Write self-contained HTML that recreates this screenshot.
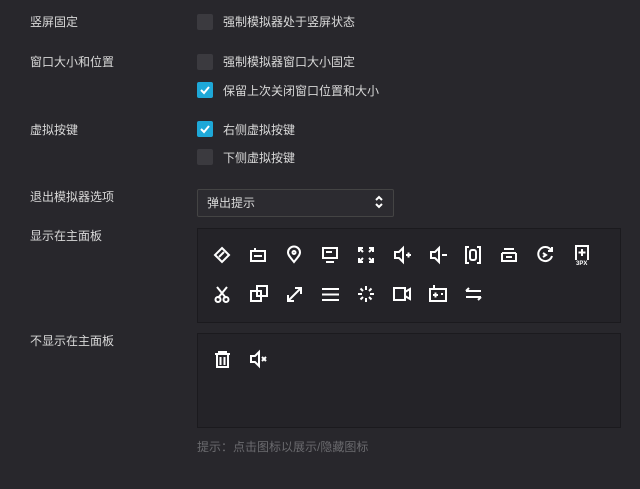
<!DOCTYPE html><html><head><meta charset="utf-8"><style>
body{margin:0;width:640px;height:489px;background:#28272c;font-family:"Liberation Sans","Noto Sans CJK SC",sans-serif;font-size:12px;color:#d8d8d8;position:relative;overflow:hidden}
.a{position:absolute;white-space:nowrap;line-height:16px}
.cb{position:absolute;left:197px;width:16px;height:16px;border-radius:2px;background:#3b3a3f}
.cb.on{background:#1ea8d8}
.panel{position:absolute;left:197px;width:422px;background:#242328;border:1px solid #1b1a1e}
svg{position:absolute;overflow:visible}
svg *{fill:none;stroke:#fff;stroke-width:2}
</style></head><body>
<div class="a" style="left:30px;top:14px">竖屏固定</div>
<div class="a" style="left:30px;top:54px">窗口大小和位置</div>
<div class="a" style="left:30px;top:122px">虚拟按键</div>
<div class="a" style="left:30px;top:189px">退出模拟器选项</div>
<div class="a" style="left:30px;top:228px">显示在主面板</div>
<div class="a" style="left:30px;top:333px">不显示在主面板</div>

<div class="cb" style="top:14px"></div><div class="a" style="left:223px;top:14px">强制模拟器处于竖屏状态</div>
<div class="cb" style="top:54px"></div><div class="a" style="left:223px;top:54px">强制模拟器窗口大小固定</div>
<div class="cb on" style="top:82px"></div><div class="a" style="left:223px;top:83px">保留上次关闭窗口位置和大小</div>
<div class="cb on" style="top:121px"></div><div class="a" style="left:223px;top:122px">右侧虚拟按键</div>
<div class="cb" style="top:149px"></div><div class="a" style="left:223px;top:150px">下侧虚拟按键</div>
<svg style="left:200px;top:85px" width="10" height="10"><path d="M1 5l3 3 5-6" stroke-width="1.8"/></svg>
<svg style="left:200px;top:124px" width="10" height="10"><path d="M1 5l3 3 5-6" stroke-width="1.8"/></svg>

<div style="position:absolute;left:197px;top:189px;width:195px;height:26px;border:1px solid #444;border-radius:2px;background:#2c2b30"></div>
<div class="a" style="left:207px;top:195px">弹出提示</div>
<svg style="left:375px;top:196px" width="8" height="12"><path d="M1 4l3-3 3 3M1 8l3 3 3-3" stroke-width="1.2"/></svg>

<div class="panel" style="top:228px;height:93px"></div>
<div class="panel" style="top:333px;height:93px"></div>
<div class="a" style="left:197px;top:439px;color:#6a6a6e">提示：点击图标以展示/隐藏图标</div>

<svg style="left:214px;top:247px" width="16" height="16"><path d="M8 1l7 7-7 7-7-7z M5 10l5-5"/></svg>
<svg style="left:250px;top:248px" width="16" height="14"><rect x="1" y="3" width="14" height="10"/><path d="M5 0v3M4 8h8"/></svg>
<svg style="left:287px;top:246px" width="14" height="18"><path d="M7 16C3 11 1 9 1 6.5A6 6 0 0 1 13 6.5C13 9 11 11 7 16z"/><circle cx="7" cy="6.5" r="1.5"/></svg>
<svg style="left:322px;top:247px" width="16" height="16"><rect x="1" y="1" width="14" height="10"/><path d="M4 15h8M4 5h6"/></svg>
<svg style="left:358px;top:247px" width="16" height="16"><path d="M1 5V1h4M11 1h4v4M15 11v4h-4M5 15H1v-4M2 2l3 3M14 2l-3 3M14 14l-3-3M2 14l3-3"/></svg>
<svg style="left:394px;top:247px" width="18" height="16"><path d="M1 5h4l4-4v14l-4-4H1z M12 8h5M14.5 5.5v5"/></svg>
<svg style="left:430px;top:247px" width="18" height="16"><path d="M1 5h4l4-4v14l-4-4H1z M12 8h5"/></svg>
<svg style="left:465px;top:246px" width="16" height="18"><path d="M4 1H1v16h3M12 1h3v16h-3"/><rect x="5" y="4" width="6" height="10" rx="2"/></svg>
<svg style="left:501px;top:248px" width="16" height="14"><path d="M3 1h10M1 5h14M1 5v8h14V5M5 9h6"/></svg>
<svg style="left:537px;top:246px" width="17" height="17"><path d="M14 4A7 7 0 1 0 15 10M15 1v4h-4M6 7l3 2-3 2"/></svg>
<svg style="left:573px;top:245px" width="18" height="20"><path d="M3 15V1h12v14M9 4v7M5.5 7.5h7"/><text x="3" y="20" style="font:bold 6px 'Liberation Sans';fill:#fff;stroke:none">3PX</text></svg>

<svg style="left:214px;top:286px" width="16" height="17"><path d="M3 1l9 11M13 1L4 12"/><circle cx="4" cy="13.5" r="2.5"/><circle cx="12" cy="13.5" r="2.5"/></svg>
<svg style="left:250px;top:285px" width="18" height="18"><rect x="1" y="6" width="10" height="10"/><rect x="7" y="1" width="10" height="10"/></svg>
<svg style="left:286px;top:286px" width="17" height="17"><path d="M2 15L15 2M9 2h6v6M2 9v6h6"/></svg>
<svg style="left:322px;top:287px" width="17" height="15"><path d="M0 2h17M0 7.5h17M0 13h17"/></svg>
<svg style="left:358px;top:286px" width="16" height="16"><path d="M8 0v4M8 12v4M0 8h4M12 8h4M2.5 2.5l2.5 2.5M11 11l2.5 2.5M13.5 2.5L11 5M5 11l-2.5 2.5" stroke-width="1.6"/></svg>
<svg style="left:393px;top:286px" width="18" height="16"><rect x="1" y="2" width="11" height="12"/><path d="M12 6l5-3v10l-5-3"/></svg>
<svg style="left:429px;top:285px" width="18" height="17"><rect x="1" y="4" width="16" height="12"/><path d="M5 0v4M4 10h5M6.5 7.5v5M12 9h2"/></svg>
<svg style="left:465px;top:287px" width="17" height="14"><path d="M1 4h15M4 1L1 4M1 10h15M13 13l3-3"/></svg>

<svg style="left:215px;top:351px" width="15" height="17"><path d="M0 3h15M4 3V1h7v2M2 3v13h11V3M5.5 6v8M9.5 6v8"/></svg>
<svg style="left:250px;top:351px" width="18" height="16"><path d="M1 5h4l4-4v14l-4-4H1z M12 6l4 4M16 6l-4 4" stroke-width="1.6"/></svg>
</body></html>
